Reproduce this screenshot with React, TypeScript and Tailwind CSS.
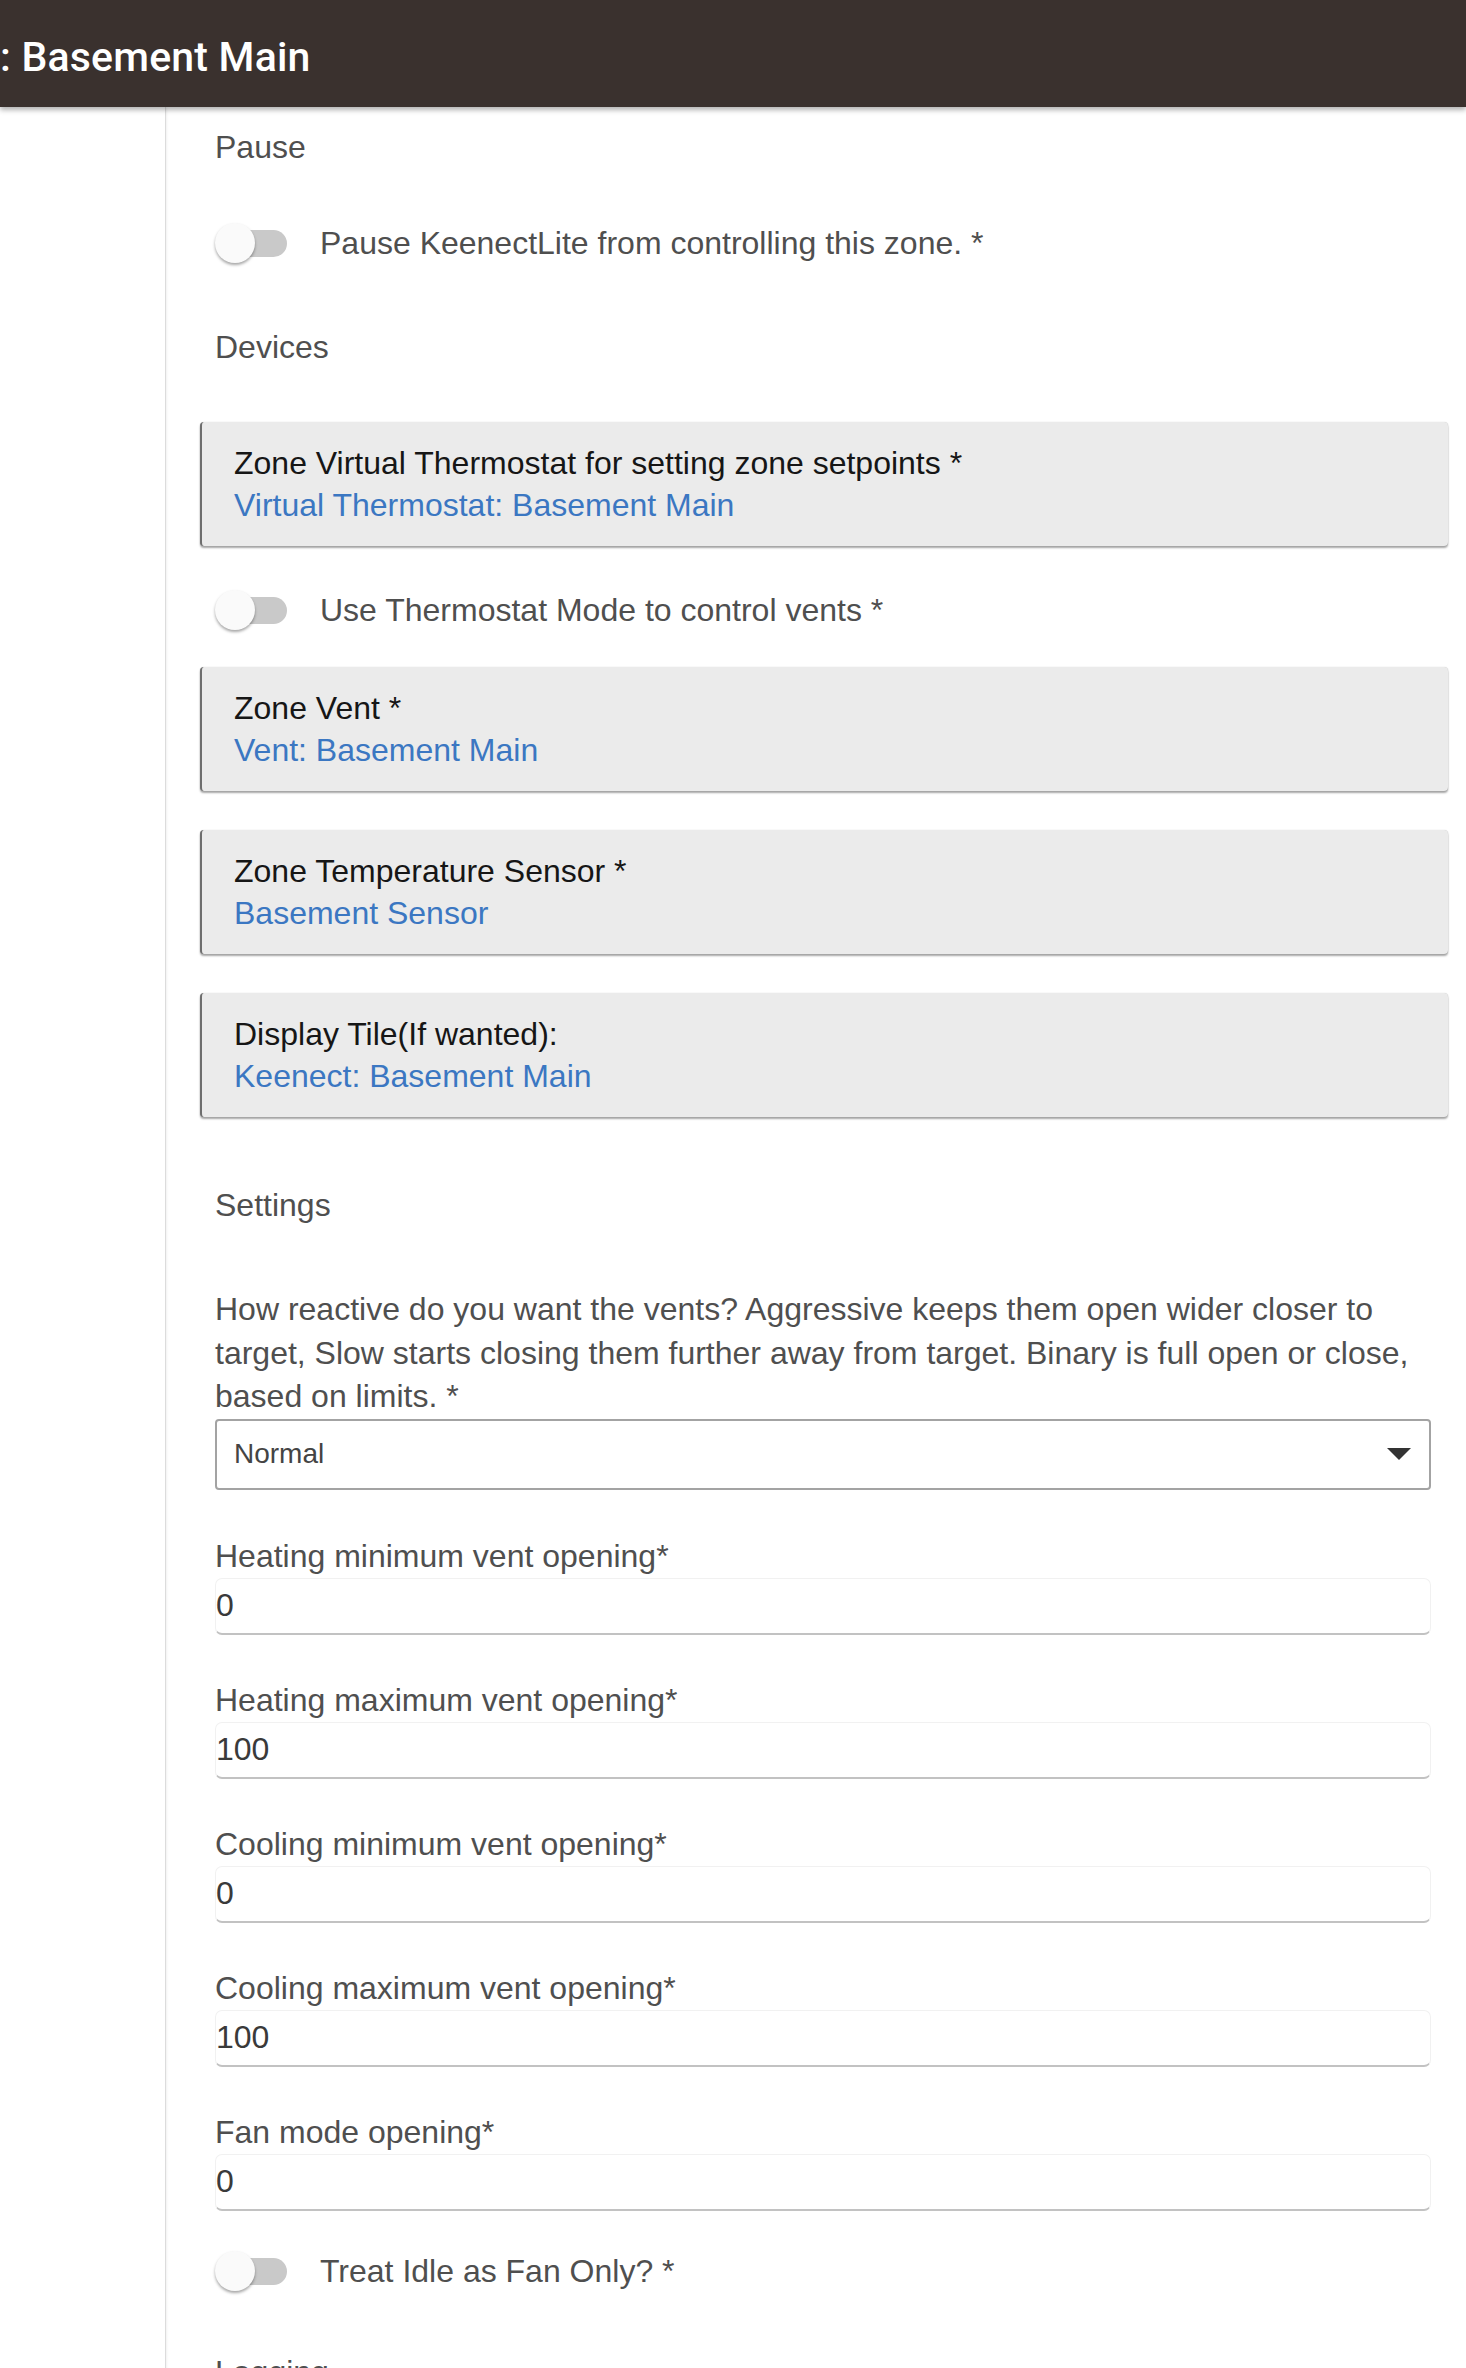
import React from "react";

function Toggle({ label }: { label: string }) {
  return (
    <div className="flex items-center h-[56px]">
      <div className="relative w-[72px] h-[40px] shrink-0">
        <div className="absolute left-[4px] top-[7px] w-[68px] h-[27px] rounded-full bg-[#c9c9c9]" />
        <div className="absolute left-0 top-0 w-[40px] h-[40px] rounded-full bg-[#fafafa] shadow-[0_2px_3px_rgba(0,0,0,0.35)]" />
      </div>
      <span className="ml-[33px] text-[32px] leading-[42px] text-[#4f4f4f]">
        {label}
      </span>
    </div>
  );
}

function DeviceCard({
  title,
  value,
  className,
}: {
  title: string;
  value: string;
  className?: string;
}) {
  return (
    <div
      className={
        "-ml-[15px] -mr-[17px] h-[124px] rounded-[4px] bg-[#ebebeb] border-l-2 border-l-[#6e6e6e] shadow-[0_2px_2px_rgba(0,0,0,0.35),0_0_1px_rgba(0,0,0,0.25)] pl-[32px] pt-[20px] " +
        (className ?? "")
      }
    >
      <div className="text-[32px] leading-[42px] text-[#161616]">{title}</div>
      <div className="text-[32px] leading-[42px] text-[#3b77c2]">{value}</div>
    </div>
  );
}

function NumberField({
  label,
  value,
  className,
}: {
  label: string;
  value: string;
  className?: string;
}) {
  return (
    <div className={className}>
      <div className="text-[32px] leading-[42px] text-[#4f4f4f]">{label}</div>
      <div className="mt-[1px] h-[57px] rounded-[7px] border border-[#f1f1f1] border-b-2 border-b-[#c2c2c2] pt-[5px] text-[32px] leading-[42px] text-[#3a3a3a]">
        {value}
      </div>
    </div>
  );
}

export default function App() {
  return (
    <div className="min-h-screen bg-white font-['Liberation_Sans','Helvetica',sans-serif]">
      <header className="relative z-10 h-[107px] bg-[#3a312e] shadow-[0_3px_5px_rgba(0,0,0,0.3)] pt-[37px]">
        <h1 className="font-['Roboto',sans-serif] text-[41px] leading-[40px] font-medium text-white tracking-[0.2px]">
          : Basement Main
        </h1>
      </header>

      <div className="flex">
        <aside className="w-[166px] shrink-0 min-h-[2300px] border-r border-[#dcdcdc] shadow-[1px_0_2px_rgba(0,0,0,0.06)]" />

        <main className="flex-1 pl-[49px] pr-[35px]">
          <div className="mt-[19px] text-[32px] leading-[42px] text-[#4f4f4f]">
            Pause
          </div>
          <div className="mt-[47px]">
            <Toggle label="Pause KeenectLite from controlling this zone. *" />
          </div>

          <div className="mt-[55px] text-[32px] leading-[42px] text-[#4f4f4f]">
            Devices
          </div>

          <DeviceCard
            className="mt-[54px]"
            title="Zone Virtual Thermostat for setting zone setpoints *"
            value="Virtual Thermostat: Basement Main"
          />

          <div className="mt-[36px]">
            <Toggle label="Use Thermostat Mode to control vents *" />
          </div>

          <DeviceCard
            className="mt-[29px]"
            title="Zone Vent *"
            value="Vent: Basement Main"
          />
          <DeviceCard
            className="mt-[39px]"
            title="Zone Temperature Sensor *"
            value="Basement Sensor"
          />
          <DeviceCard
            className="mt-[39px]"
            title="Display Tile(If wanted):"
            value="Keenect: Basement Main"
          />

          <div className="mt-[67px] text-[32px] leading-[42px] text-[#4f4f4f]">
            Settings
          </div>

          <p className="mt-[62px] text-[32px] leading-[43.5px] text-[#4f4f4f]">
            How reactive do you want the vents? Aggressive keeps them open wider
            closer to target, Slow starts closing them further away from target.
            Binary is full open or close, based on limits. *
          </p>

          <div className="flex items-center h-[71px] rounded-[4px] border-2 border-[#a3a3a3] pl-[17px] pr-[18px]">
            <span className="flex-1 text-[28px] leading-[40px] text-[#444444]">
              Normal
            </span>
            <svg width="24" height="12" viewBox="0 0 24 12">
              <polygon points="0,0 24,0 12,12" fill="#333333" />
            </svg>
          </div>

          <NumberField
            className="mt-[45px]"
            label="Heating minimum vent opening*"
            value="0"
          />
          <NumberField
            className="mt-[44px]"
            label="Heating maximum vent opening*"
            value="100"
          />
          <NumberField
            className="mt-[44px]"
            label="Cooling minimum vent opening*"
            value="0"
          />
          <NumberField
            className="mt-[44px]"
            label="Cooling maximum vent opening*"
            value="100"
          />
          <NumberField
            className="mt-[44px]"
            label="Fan mode opening*"
            value="0"
          />

          <div className="mt-[32px]">
            <Toggle label="Treat Idle as Fan Only? *" />
          </div>

          <div className="mt-[52px] text-[32px] leading-[42px] text-[#4f4f4f]">
            Logging
          </div>
          <div className="h-[200px]" />
        </main>
      </div>
    </div>
  );
}
